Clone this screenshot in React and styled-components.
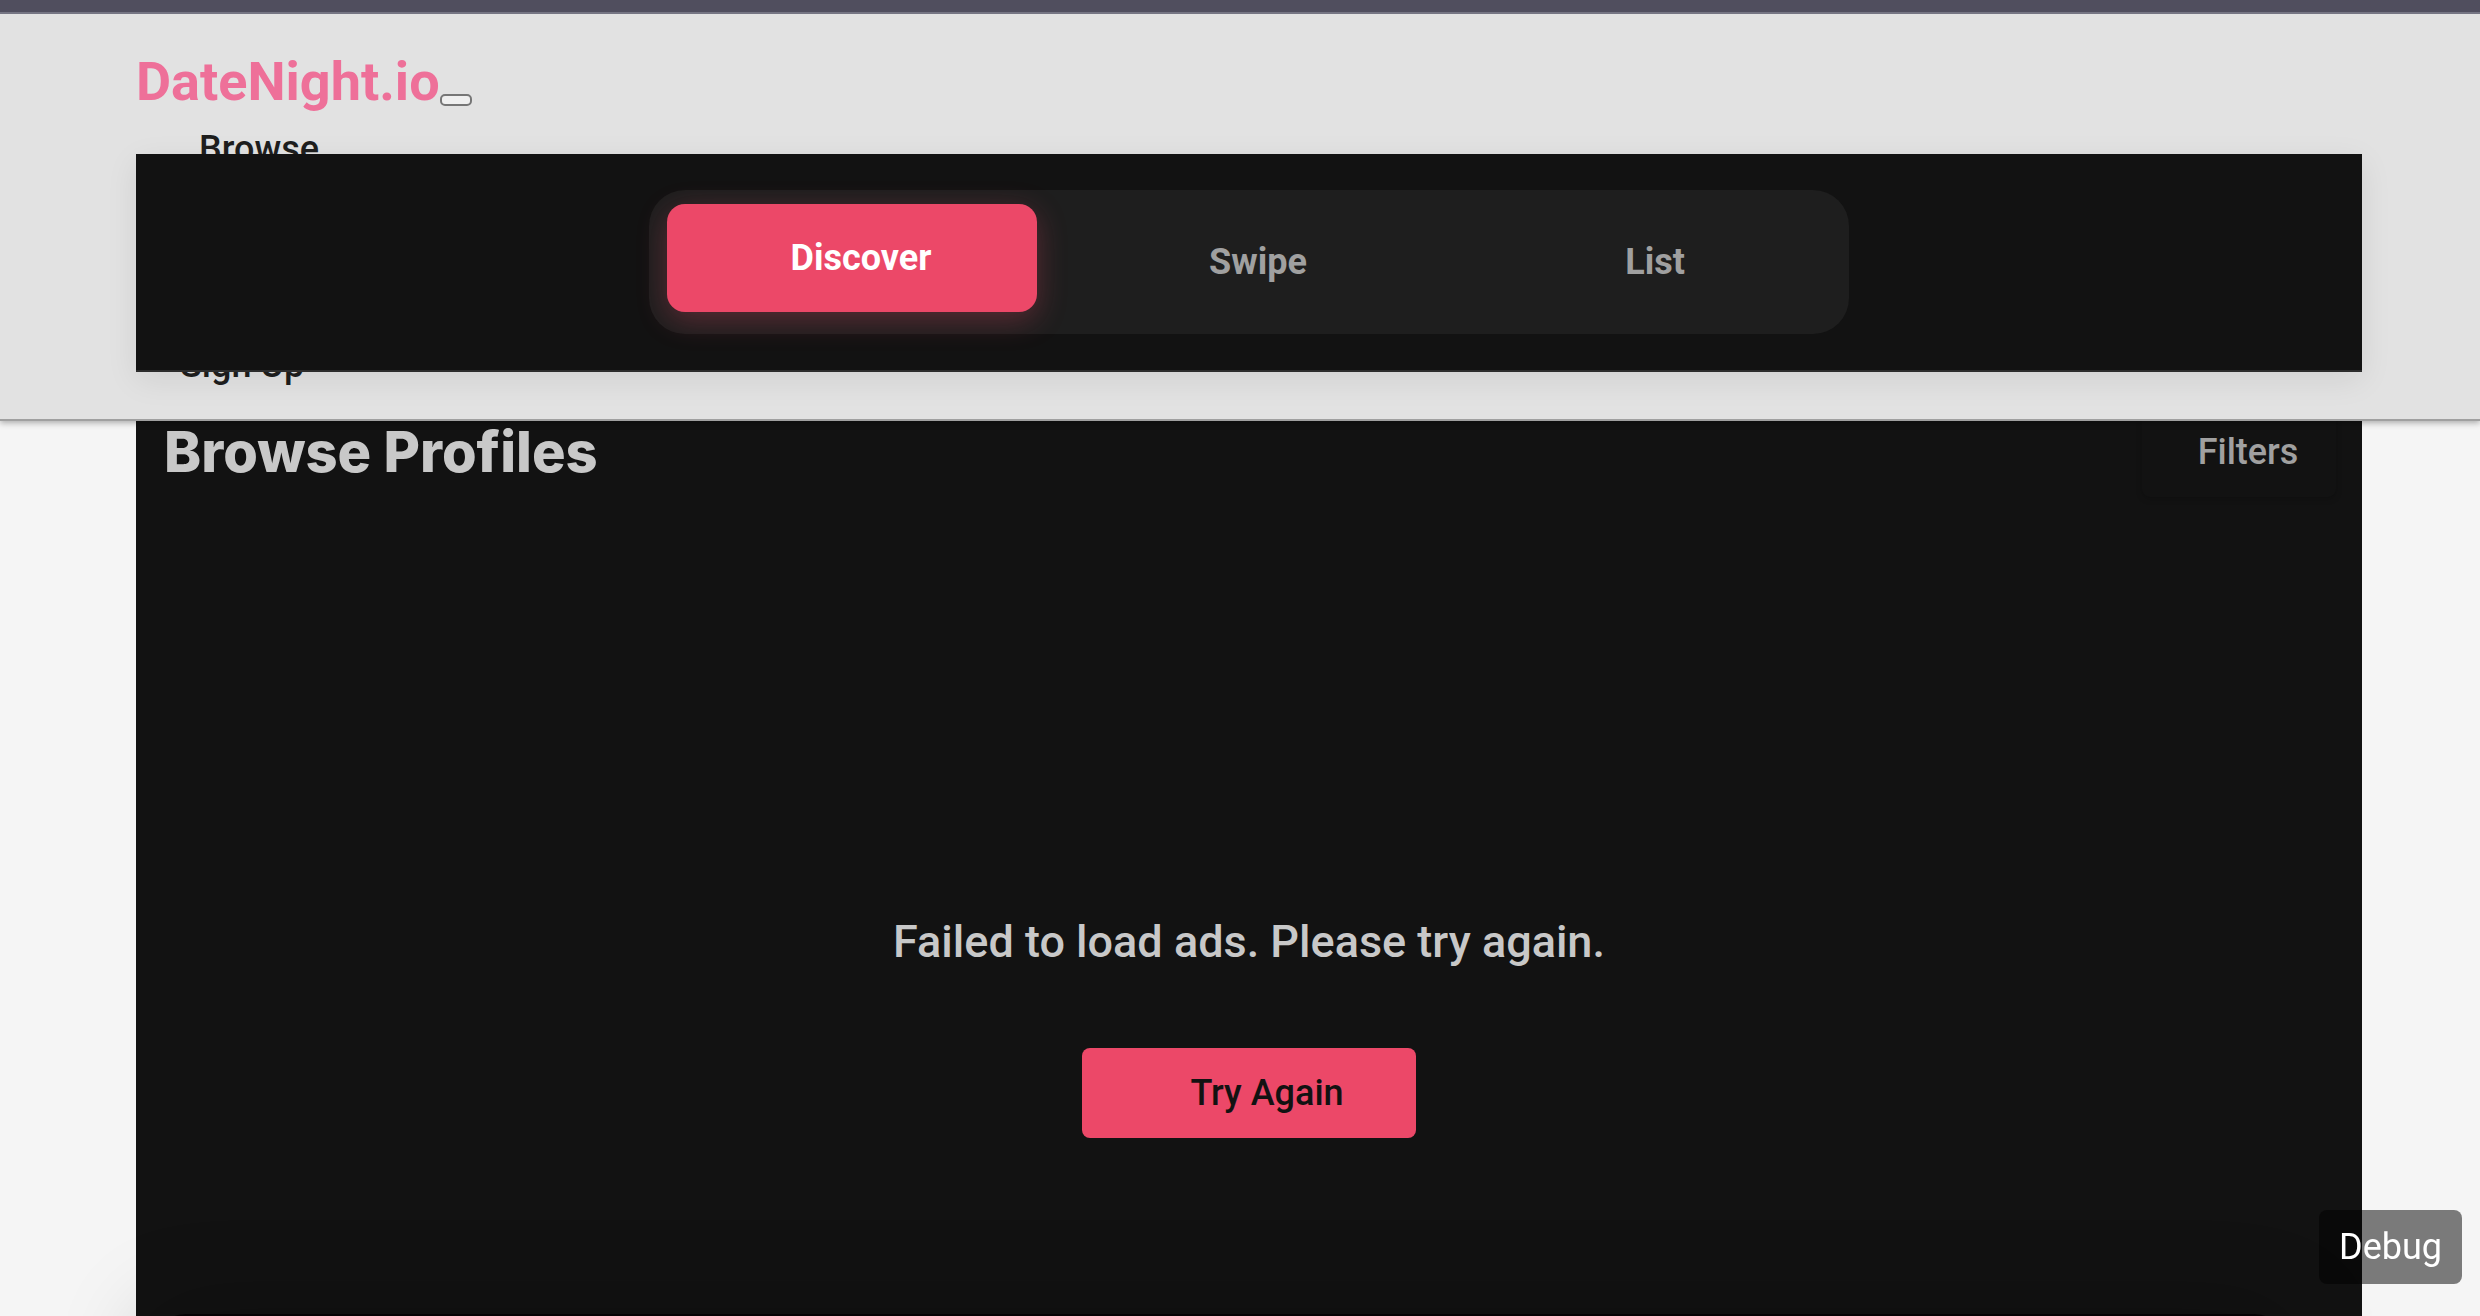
import React from "react";
import styled, { createGlobalStyle } from "styled-components";

const GlobalStyle = createGlobalStyle`
  *, *::before, *::after { box-sizing: border-box; }
  html, body { margin: 0; padding: 0; }
  body {
    background: #f5f5f5;
    font-family: Roboto, "Liberation Sans", sans-serif;
    font-size: 36px;
    line-height: 54px;
    overflow: hidden;
  }
`;

const Page = styled.div`
  min-height: 100vh;
  display: flex;
  flex-direction: column;
`;

const Container = styled.div`
  width: 100%;
  padding: 0 118px 0 136px;
`;

const Header = styled.header`
  position: relative;
  z-index: 1;
  background: #e2e2e2;
  border-bottom: 2px solid #a0a0a0;
  box-shadow: 0 2px 6px rgba(0, 0, 0, 0.3);
`;

const TopBar = styled.div`
  height: 14px;
  margin-bottom: 36px;
  background: #504e5e;
  border-bottom: 2px solid #757583;
`;

const BrandRow = styled.div`
  display: flex;
  align-items: flex-end;
`;

const Brand = styled.a`
  color: #ee7099;
  font-size: 54px;
  line-height: 64px;
  font-weight: 700;
  text-decoration: none;
`;

const MenuToggle = styled.button`
  width: 32px;
  height: 12px;
  margin: 0 0 8px;
  padding: 0;
  border: 2px solid #767676;
  border-radius: 5px;
  background: #efefef;
`;

const NavList = styled.ul`
  list-style: none;
  margin: 0;
  padding: 8px 0 27px 28px;
  display: flex;
  flex-direction: column;
  align-items: flex-start;
  gap: 162px;
`;

const NavLink = styled.a`
  display: block;
  padding-left: ${(p) => (p.$indent ? 35 : 16)}px;
  color: #1e1e1e;
  font-weight: 500;
  text-decoration: none;
`;

const Switcher = styled.div`
  position: absolute;
  z-index: 2;
  top: 154px;
  left: 136px;
  right: 118px;
  display: flex;
  justify-content: center;
  padding: 36px 0;
  background: #121212;
  border-bottom: 2px solid #2c2c2c;
  box-shadow: 0 8px 30px rgba(0, 0, 0, 0.08);
`;

const Tabs = styled.div`
  width: 1200px;
  display: grid;
  grid-template-columns: repeat(3, 1fr);
  gap: 27px;
  padding: 18px;
  border-radius: 36px;
  background: #1e1e1e;
`;

const Tab = styled.button`
  height: 108px;
  padding: 0 0 0 18px;
  border: 0;
  border-radius: 18px;
  background: ${(p) => (p.$active ? "#ec4868" : "transparent")};
  color: ${(p) => (p.$active ? "#ffffff" : "#a0a0a0")};
  box-shadow: ${(p) => (p.$active ? "0 8px 30px rgba(236, 72, 104, 0.3)" : "none")};
  transform: ${(p) => (p.$active ? "translateY(-4px)" : "none")};
  font: inherit;
  font-weight: 700;
`;

const MainContainer = styled(Container)`
  flex: 1;
  display: flex;
  flex-direction: column;
`;

const Main = styled.main`
  flex: 1;
  display: flex;
  flex-direction: column;
  background: #121212;
`;

const TitleRow = styled.div`
  display: flex;
  align-items: center;
  justify-content: space-between;
  height: 90px;
  margin-top: -14px;
  padding: 0 26px 0 28px;
`;

const Title = styled.h1`
  margin: 0;
  color: #c8c8c8;
  font-family: Inter, "Open Sans", sans-serif;
  font-size: 56px;
  line-height: 64px;
  font-weight: 800;
`;

const FilterButton = styled.button`
  width: 194px;
  height: 90px;
  padding: 0 0 0 18px;
  border: 0;
  border-radius: 8px;
  background: #121212;
  color: #a0a0a0;
  box-shadow: 0 2px 6px rgba(0, 0, 0, 0.2);
  font: inherit;
  font-weight: 500;
`;

const ErrorState = styled.section`
  display: flex;
  flex-direction: column;
  align-items: center;
  gap: 70px;
  padding-top: 409px;
`;

const ErrorText = styled.p`
  margin: 0;
  color: #c8c8c8;
  font-size: 45px;
  line-height: 72px;
  font-weight: 500;
`;

const RetryButton = styled.button`
  width: 334px;
  height: 90px;
  padding: 0 0 0 36px;
  border: 0;
  border-radius: 8px;
  background: #ec4868;
  color: #121212;
  font: inherit;
  font-weight: 500;
`;

const DebugButton = styled.button`
  position: fixed;
  z-index: 4;
  right: 18px;
  bottom: 32px;
  padding: 10px 20px;
  border: 0;
  border-radius: 8px;
  background: rgba(0, 0, 0, 0.5);
  color: #ffffff;
  font: inherit;
`;

const BottomSheet = styled.div`
  position: fixed;
  z-index: 3;
  left: 150px;
  right: 190px;
  bottom: -198px;
  height: 200px;
  border-radius: 36px;
  background: #050204;
  box-shadow: 0 0 90px rgba(0, 0, 0, 0.25);
`;

const TABS = ["Discover", "Swipe", "List"];

export default function App() {
  return (
    <Page>
      <GlobalStyle />
      <Header>
        <TopBar />
        <Container>
          <BrandRow>
            <Brand href="#">DateNight.io</Brand>
            <MenuToggle aria-label="Toggle navigation" />
          </BrandRow>
          <nav>
            <NavList>
              <li><NavLink href="#browse" $indent>Browse</NavLink></li>
              <li><NavLink href="#signup">Sign Up</NavLink></li>
            </NavList>
          </nav>
        </Container>
      </Header>
      <Switcher>
        <Tabs role="tablist">
          {TABS.map((name, i) => (
            <Tab key={name} role="tab" aria-selected={i === 0} $active={i === 0}>{name}</Tab>
          ))}
        </Tabs>
      </Switcher>
      <MainContainer>
        <Main>
          <TitleRow>
            <Title>Browse Profiles</Title>
            <FilterButton>Filters</FilterButton>
          </TitleRow>
          <ErrorState>
            <ErrorText>Failed to load ads. Please try again.</ErrorText>
            <RetryButton>Try Again</RetryButton>
          </ErrorState>
        </Main>
      </MainContainer>
      <BottomSheet />
      <DebugButton>Debug</DebugButton>
    </Page>
  );
}
